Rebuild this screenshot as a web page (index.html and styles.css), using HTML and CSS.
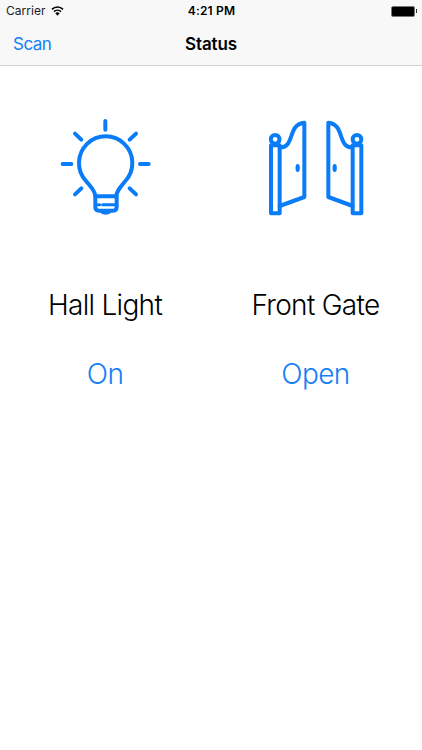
FILE: index.html
```html
<!DOCTYPE html>
<html lang="en">
<head>
    <meta charset="UTF-8">
    <meta name="viewport" content="width=device-width, initial-scale=1.0">
    <title>Status</title>
    <link rel="stylesheet" href="styles.css">
</head>
<body>
    <header class="header">
        <div class="status-bar">
            <div class="carrier">
                <span>Carrier</span>
                <svg class="wifi" viewBox="0 0 39 30">
                    <path d="M3 10a23 23 0 0 1 33 0" />
                    <path d="M9 17a15 15 0 0 1 21 0" />
                    <path class="dot" d="M13 22a9 9 0 0 1 13 0l-6.500 7z" />
                </svg>
            </div>
            <span class="time">4:21 PM</span>
            <div class="power">
                <div class="battery"></div>
                <div class="battery-tip"></div>
            </div>
        </div>
        <nav class="nav-bar">
            <a class="back" href="#">Scan</a>
            <h1 class="title">Status</h1>
        </nav>
    </header>

    <main class="devices">
        <section class="device">
            <svg class="icon" viewBox="0 0 330 345">
                <!-- rays -->
                <path d="M166 33v26M75 71l19 18M258 71l-19 18M38 162h26M270 162h26M94 235l-19 18M239 235l19 18" />
                <!-- bulb -->
                <path d="M136 259c0-16-14-29-28-46a80 80 0 1 1 118 0c-14 17-27 30-27 46z" />
                <!-- base -->
                <path d="M136 259v32q0 11 11 11h6q5 6 14 6t14-6h8q11 0 11-11v-32M150 302h36" />
                <path class="thin" d="M158 284h40M145 284h4" />
            </svg>
            <div class="name">Hall Light</div>
            <a class="state" href="#">On</a>
        </section>
        <section class="device">
            <svg class="icon gate" viewBox="0 0 330 345">
                <!-- left door -->
                <circle cx="45.500" cy="88" r="13" />
                <path d="M33 106h26v204h-26z" />
                <path d="M59 112c46 3 23-70 74-74v223l-74 27" />
                <ellipse class="knob" cx="113" cy="174" rx="6.500" ry="12" />
                <!-- right door -->
                <circle cx="291" cy="88" r="13" />
                <path d="M278 106h26v204h-26z" />
                <path d="M278 112c-46 3-23-70-73-74v223l73 27" />
                <ellipse class="knob" cx="224" cy="174" rx="6.500" ry="12" />
            </svg>
            <div class="name">Front Gate</div>
            <a class="state" href="#">Open</a>
        </section>
    </main>
</body>
</html>
```
FILE: styles.css
```css
body {
    margin: 0;
    min-height: 100vh;
    font-family: Inter, "Liberation Sans", sans-serif;
    background-color: #fff;
    color: #000;
}

a {
    color: #1580f5;
    text-decoration: none;
}

.header {
    height: 65px;
    background-color: #f8f8f8;
    border-bottom: 1px solid #d2d2d2;
}

.status-bar {
    display: grid;
    grid-template-columns: 1fr auto 1fr;
    align-items: center;
    height: 22px;
    padding: 0 5px 0 6px;
    font-size: 12px;
    line-height: 22px;
}

.carrier {
    display: flex;
    align-items: center;
    gap: 5px;
    color: #222;
    letter-spacing: 0.05px;
}

.wifi {
    width: 13px;
    height: 10px;
    fill: none;
    stroke: #000;
    stroke-width: 5;
}

.wifi .dot {
    fill: #000;
    stroke: none;
}

.time {
    font-weight: 600;
    letter-spacing: 0.15px;
}

.power {
    display: flex;
    justify-content: flex-end;
    align-items: center;
    gap: 1px;
}

.battery {
    width: 22px;
    height: 9px;
    border: 1px solid #777;
    border-radius: 2px;
    box-sizing: content-box;
    background-color: #000;
}

.battery-tip {
    width: 1px;
    height: 4px;
    background-color: #333;
}

.nav-bar {
    display: grid;
    grid-template-columns: 1fr auto 1fr;
    align-items: center;
    height: 43px;
    padding: 0 13px;
}

.back {
    font-size: 17px;
    letter-spacing: -0.5px;
}

.title {
    margin: 0;
    font-size: 17px;
    font-weight: 600;
    letter-spacing: -0.1px;
}

.devices {
    display: grid;
    grid-template-columns: 210px 211px;
    padding-top: 44px;
}

.device {
    display: flex;
    flex-direction: column;
    align-items: center;
    font-size: 28px;
    font-weight: 300;
    line-height: 34px;
}

.icon {
    width: 110px;
    height: 115px;
    margin-bottom: 63px;
    fill: none;
    stroke: #0a7cf8;
    stroke-width: 12;
    stroke-linecap: round;
    stroke-linejoin: round;
}

.gate {
    margin-right: 1px;
}

.icon .thin {
    stroke-width: 9;
}

.icon .knob {
    fill: #0a7cf8;
    stroke: none;
}

.name {
    margin-bottom: 35px;
    letter-spacing: -0.7px;
}

.state {
    letter-spacing: -0.6px;
}
```
